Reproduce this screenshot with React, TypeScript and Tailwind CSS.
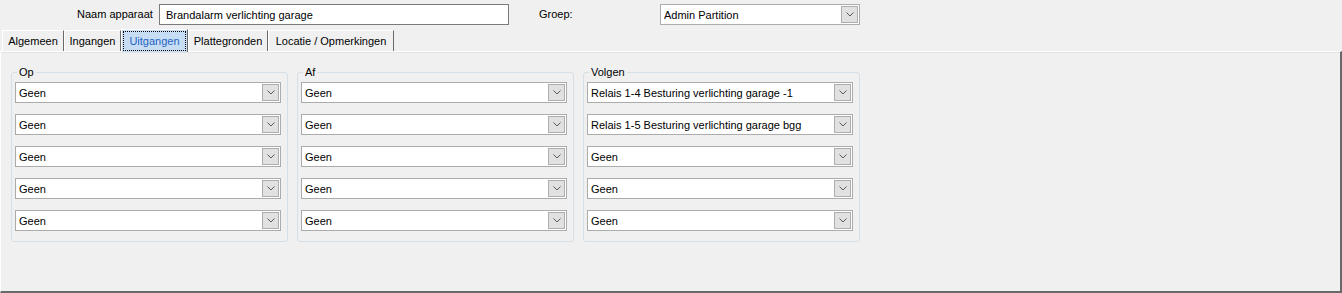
import React from 'react';

const font = { fontFamily: '"Liberation Sans", Arial, sans-serif' };

const Chevron = () => (
  <svg width="8" height="5" viewBox="0 0 8 5" className="block">
    <polyline points="0.5,0.5 4,4 7.5,0.5" fill="none" stroke="#5a5a5a" strokeWidth="1" />
  </svg>
);

const Combo = ({ value, className = '' }: { value: string; className?: string }) => (
  <div className={`flex items-center h-[21px] bg-white border border-[#acacac] ${className}`}>
    <span className="flex-1 pl-[3px] pt-[1px] truncate text-black leading-none">{value}</span>
    <div className="w-[17px] h-[17px] mr-[1px] flex items-center justify-center bg-[#e1e1e1] border border-[#adadad]">
      <Chevron />
    </div>
  </div>
);

const tabs = [
  { label: 'Algemeen', w: 'w-[62px]' },
  { label: 'Ingangen', w: 'w-[57px]' },
  { label: 'Uitgangen', w: 'w-[67px]', active: true },
  { label: 'Plattegronden', w: 'w-[80px]' },
  { label: 'Locatie / Opmerkingen', w: 'w-[126px]' },
];

const groups = [
  { title: 'Op', values: ['Geen', 'Geen', 'Geen', 'Geen', 'Geen'] },
  { title: 'Af', values: ['Geen', 'Geen', 'Geen', 'Geen', 'Geen'] },
  {
    title: 'Volgen',
    values: [
      'Relais 1-4 Besturing verlichting garage -1',
      'Relais 1-5 Besturing verlichting garage bgg',
      'Geen',
      'Geen',
      'Geen',
    ],
  },
];

const GroupBox = ({ title, values }: { title: string; values: string[] }) => (
  <div className="relative w-[277px] h-[170px] border border-[#d5dfe5] rounded-[3px] pl-[3px] pr-[6px] pt-[9px] pb-[10px]">
    <span className="absolute left-[5px] -top-[7px] px-[2px] bg-[#f0f0f0] leading-[13px] text-black">{title}</span>
    <div className="flex flex-col gap-[11px]">
      {values.map((v, i) => (
        <Combo key={i} value={v} className="w-full" />
      ))}
    </div>
  </div>
);

export default function App() {
  return (
    <div className="w-[1342px] h-[293px] bg-[#f0f0f0] text-[11px] text-black flex flex-col overflow-hidden" style={font}>
      {/* header */}
      <div className="flex items-start h-[29px] pt-[4px]">
        <span className="ml-[77px] w-[82px] leading-[21px]">Naam apparaat</span>
        <div className="w-[350px] h-[21px] bg-white border border-[#7a7a7a] flex items-center pl-[6px] pt-[1px]">
          Brandalarm verlichting garage
        </div>
        <span className="ml-[30px] w-[121px] leading-[21px]">Groep:</span>
        <Combo value="Admin Partition" className="w-[200px]" />
      </div>

      {/* tabs */}
      <div className="flex items-end h-[22px] pl-[2px] relative z-10">
        {tabs.map((t) =>
          t.active ? (
            <div
              key={t.label}
              className={`${t.w} h-[23px] -mb-[1px] bg-[#c7ddf3] border-t border-l border-white border-r border-r-[#696969] p-[1px]`}
            >
              <div className="h-full border border-dotted border-black flex items-center justify-center text-[#1f64c4]">
                {t.label}
              </div>
            </div>
          ) : (
            <div
              key={t.label}
              className={`${t.w} h-[21px] flex items-center justify-center border-t border-l border-white border-r border-r-[#696969] bg-[#f0f0f0]`}
            >
              {t.label}
            </div>
          )
        )}
      </div>

      {/* tab page */}
      <div className="flex-1 border-t border-l border-white border-r-2 border-r-[#696969] border-b-2 border-b-[#696969]">
        <div className="h-full border-t border-[#e3e3e3] pt-[19px] pl-[10px] flex gap-[9px] items-start">
          {groups.map((g) => (
            <GroupBox key={g.title} title={g.title} values={g.values} />
          ))}
        </div>
      </div>
    </div>
  );
}
